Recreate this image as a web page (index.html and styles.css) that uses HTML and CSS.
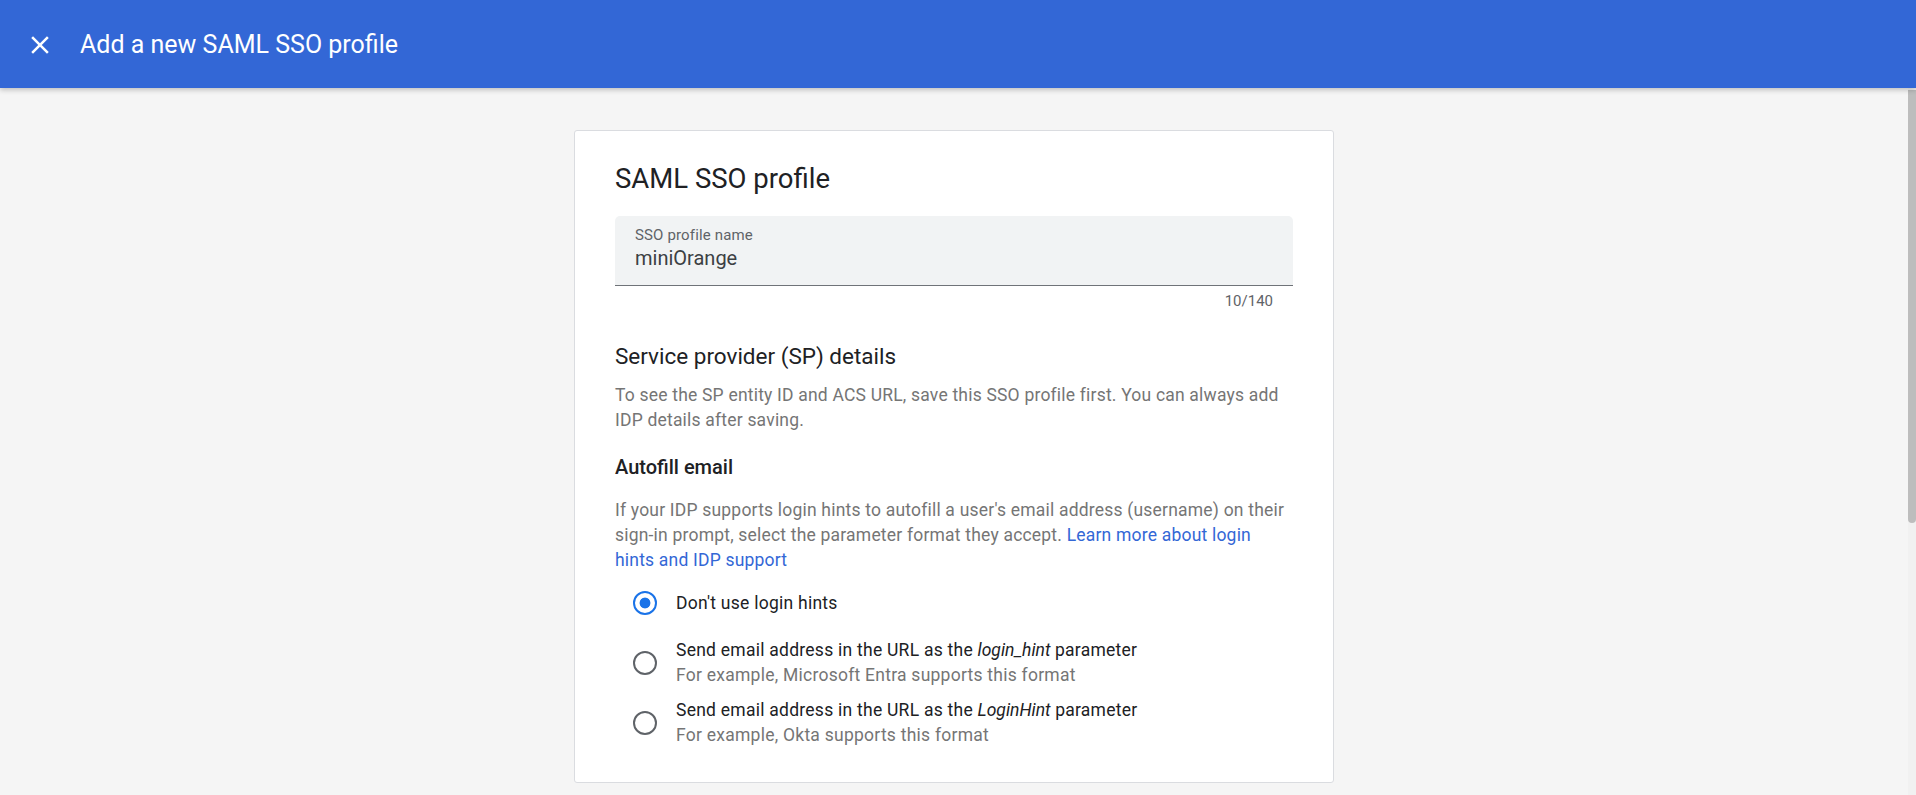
FILE: index.html
```html
<!DOCTYPE html>
<html lang="en">
<head>
    <meta charset="UTF-8">
    <meta name="viewport" content="width=device-width, initial-scale=1.0">
    <title>Add a new SAML SSO profile</title>
    <link rel="stylesheet" href="styles.css">
</head>
<body>
    <header class="topbar">
        <button class="close-btn" aria-label="Close">
            <svg viewBox="0 0 24 24" width="30" height="30">
                <path d="M19 6.41L17.59 5 12 10.59 6.41 5 5 6.41 10.59 12 5 17.59 6.41 19 12 13.41 17.59 19 19 17.59 13.41 12z" fill="#fff"/>
            </svg>
        </button>
        <h1 class="topbar-title">Add a new SAML SSO profile</h1>
    </header>

    <div class="page">
        <main class="content" id="content">
            <section class="card">
                <h2 class="card-title">SAML SSO profile</h2>

                <div class="field">
                    <label class="field-label" for="profileName">SSO profile name</label>
                    <input class="field-input" type="text" id="profileName" value="miniOrange" maxlength="140">
                </div>
                <div class="field-counter">10/140</div>

                <h3 class="section-title">Service provider (SP) details</h3>
                <p class="section-text">To see the SP entity ID and ACS URL, save this SSO profile first. You can always add IDP details after saving.</p>

                <h4 class="sub-title">Autofill email</h4>
                <p class="section-text">If your IDP supports login hints to autofill a user's email address (username) on their sign-in prompt, select the parameter format they accept. <a href="#">Learn more about login hints and IDP support</a></p>

                <div class="options">
                    <label class="option">
                        <span class="radio-wrap"><input type="radio" name="hint" value="none" checked></span>
                        <span class="option-text">
                            <span class="option-main">Don't use login hints</span>
                        </span>
                    </label>
                    <label class="option">
                        <span class="radio-wrap"><input type="radio" name="hint" value="login_hint"></span>
                        <span class="option-text">
                            <span class="option-main">Send email address in the URL as the <em>login_hint</em> parameter</span>
                            <span class="option-sub">For example, Microsoft Entra supports this format</span>
                        </span>
                    </label>
                    <label class="option">
                        <span class="radio-wrap"><input type="radio" name="hint" value="LoginHint"></span>
                        <span class="option-text">
                            <span class="option-main">Send email address in the URL as the <em>LoginHint</em> parameter</span>
                            <span class="option-sub">For example, Okta supports this format</span>
                        </span>
                    </label>
                </div>
            </section>
        </main>
        <div class="scrollbar" aria-hidden="true"><div class="scrollbar-thumb" id="thumb"></div></div>
    </div>

    <script>
        // Keep the character counter in sync with the name field
        const nameInput = document.getElementById('profileName');
        const counter = document.querySelector('.field-counter');
        nameInput.addEventListener('input', () => {
            counter.textContent = `${nameInput.value.length}/140`;
        });

        // Thin scrollbar that follows the content
        const content = document.getElementById('content');
        const thumb = document.getElementById('thumb');
        const updateThumb = () => {
            const ratio = content.clientHeight / content.scrollHeight;
            thumb.style.height = `${Math.round(content.clientHeight * ratio)}px`;
            thumb.style.marginTop = `${Math.round(content.scrollTop * ratio) + 2}px`;
        };
        content.addEventListener('scroll', updateThumb);
        window.addEventListener('resize', updateThumb);
        updateThumb();
    </script>
</body>
</html>
```

FILE: styles.css
```css
:root {
    --header-bg: #3367d6;
    --page-bg: #f5f5f5;
    --text-main: #202124;
    --text-muted: #757575;
    --text-label: #5f6368;
    --field-bg: #f1f3f4;
    --radio-on: #1a73e8;
    --link: #3367d6;
}

body {
    margin: 0;
    height: 100vh;
    display: flex;
    flex-direction: column;
    overflow: hidden;
    font-family: Roboto, "Noto Sans", Arial, sans-serif;
    background-color: var(--page-bg);
    color: var(--text-main);
}

.topbar {
    flex: none;
    height: 88px;
    display: flex;
    align-items: center;
    gap: 25px;
    padding: 1px 0 0 25px;
    box-sizing: border-box;
    background-color: var(--header-bg);
    box-shadow: 0 2px 5px rgba(0, 0, 0, 0.22);
    position: relative;
    z-index: 2;
}

.close-btn {
    width: 30px;
    height: 30px;
    padding: 0;
    border: none;
    background: none;
    cursor: pointer;
}

.close-btn svg {
    display: block;
}

.topbar-title {
    margin: 0;
    font-size: 25px;
    font-weight: 400;
    color: #fff;
}

.page {
    flex: 1;
    min-height: 0;
    display: flex;
}

.content {
    flex: 1;
    overflow-y: auto;
    padding: 42px 0 460px;
}

.content::-webkit-scrollbar {
    width: 0;
}

.scrollbar {
    flex: none;
    width: 8px;
    background: #f1f1f1;
}

.scrollbar-thumb {
    height: 433px;
    margin-top: 2px;
    background: #bdbdbd;
    border-radius: 0 0 4px 4px;
}

.card {
    width: 760px;
    box-sizing: border-box;
    margin: 0 auto;
    padding: 30px 40px 34px;
    background: #fff;
    border: 1px solid #dadce0;
    border-radius: 3px;
}

.card-title {
    margin: 0 0 20px;
    font-size: 27.5px;
    line-height: 35px;
    font-weight: 400;
}

.field {
    height: 70px;
    box-sizing: border-box;
    padding: 9px 20px 0;
    display: flex;
    flex-direction: column;
    background: var(--field-bg);
    border-bottom: 1px solid #6f7378;
    border-radius: 5px 5px 0 0;
}

.field-label {
    font-size: 15px;
    line-height: 20px;
    letter-spacing: 0.15px;
    color: var(--text-label);
}

.field-input {
    margin-top: 1px;
    padding: 0;
    border: none;
    background: transparent;
    outline: none;
    font-family: inherit;
    font-size: 20px;
    line-height: 25px;
    height: 25px;
    color: #3c4043;
}

.field-counter {
    margin-top: 5px;
    padding-right: 20px;
    text-align: right;
    font-size: 15px;
    line-height: 20px;
    color: var(--text-label);
}

.section-title {
    margin: 30px 0 12px;
    font-size: 22.5px;
    line-height: 30px;
    font-weight: 400;
}

.section-text {
    margin: 0;
    font-size: 17.5px;
    line-height: 25px;
    letter-spacing: 0.2px;
    color: var(--text-muted);
}

.section-text a {
    color: var(--link);
    text-decoration: none;
}

.sub-title {
    margin: 22px 0 18px;
    font-size: 20px;
    line-height: 25px;
    font-weight: 500;
}

.options {
    margin-top: 5px;
    display: flex;
    flex-direction: column;
    gap: 10px;
}

.option {
    display: flex;
    align-items: center;
    min-height: 50px;
    cursor: pointer;
}

.radio-wrap {
    flex: none;
    width: 50px;
    height: 50px;
    margin-left: 5px;
    display: flex;
    align-items: center;
    justify-content: center;
}

.radio-wrap input {
    appearance: none;
    -webkit-appearance: none;
    width: 24px;
    height: 24px;
    margin: 0;
    border: 2.5px solid var(--text-label);
    border-radius: 50%;
    cursor: pointer;
}

.radio-wrap input:checked {
    border-color: var(--radio-on);
    background: radial-gradient(circle, var(--radio-on) 0 5px, transparent 5.8px);
}

.option-text {
    display: flex;
    flex-direction: column;
    padding-left: 6px;
    font-size: 17.5px;
    line-height: 25px;
    letter-spacing: 0.25px;
}

.option-main {
    color: var(--text-main);
}

.option-main em {
    letter-spacing: 0;
}

.option-sub {
    color: var(--text-muted);
}
```
